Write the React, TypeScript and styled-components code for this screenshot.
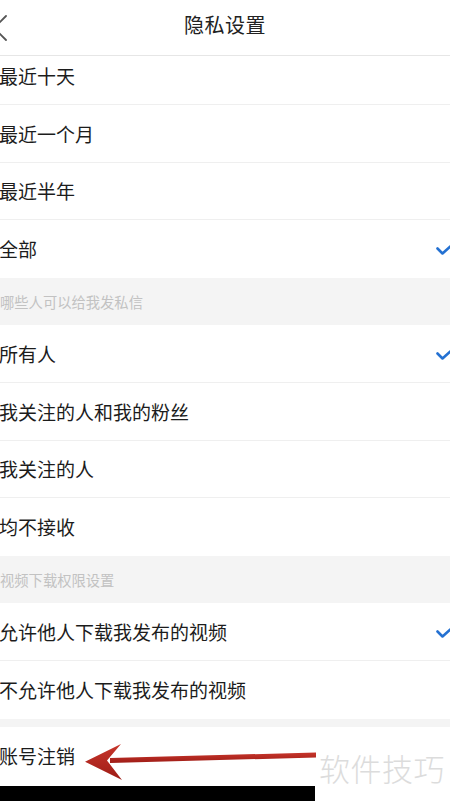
import styled, { createGlobalStyle } from "styled-components";

const GlobalStyle = createGlobalStyle`
  html, body {
    margin: 0;
    padding: 0;
    background: #ffffff;
  }
  body {
    font-family: "Noto Sans CJK SC", "Noto Sans", sans-serif;
    overflow: hidden;
  }
`;

const Screen = styled.div`
  position: relative;
  width: 450px;
  height: 801px;
  overflow: hidden;
  background: #ffffff;
  display: flex;
  flex-direction: column;
`;

const NavBar = styled.header`
  position: relative;
  z-index: 2;
  height: 56px;
  flex-shrink: 0;
  box-sizing: border-box;
  border-bottom: 1px solid #e6e6e6;
  background: #ffffff;
  display: grid;
  grid-template-columns: 60px 1fr 60px;
  align-items: center;
`;

const BackButton = styled.button`
  border: none;
  background: transparent;
  padding: 0;
  margin-left: -9px;
  height: 56px;
  display: flex;
  align-items: center;
  justify-self: start;
`;

const Title = styled.h1`
  margin: 0;
  text-align: center;
  font-size: 20px;
  font-weight: 400;
  color: #222;
  letter-spacing: 0.5px;
  transform: translateY(-4px);
`;

const Scroller = styled.main`
  flex: 1;
  overflow: hidden;
`;

const List = styled.div`
  margin-top: -8.6px;
  display: flex;
  flex-direction: column;
`;

const Row = styled.div<{ $last?: boolean }>`
  height: 57.6px;
  flex-shrink: 0;
  box-sizing: border-box;
  border-bottom: ${(p) => (p.$last ? "none" : "1px solid #efefef")};
  display: flex;
  align-items: center;
  justify-content: space-between;
  padding-left: 0;
  font-size: 19px;
  color: #1c1c1c;
  background: #ffffff;
`;

const RowLabel = styled.span`
  margin-left: -1px;
  white-space: nowrap;
`;

const Check = styled.svg`
  width: 20px;
  height: 14px;
  margin-right: -6px;
  flex-shrink: 0;
`;

const SectionHeader = styled.div`
  height: 47.6px;
  flex-shrink: 0;
  background: #f4f4f4;
  display: flex;
  align-items: center;
  font-size: 14.3px;
  color: #c2c2c2;
`;

const Spacer = styled.div`
  height: 8px;
  flex-shrink: 0;
  background: #f4f4f4;
`;

const BottomBar = styled.div`
  height: 15px;
  width: 315px;
  background: #000;
  flex-shrink: 0;
`;

const Watermark = styled.div`
  position: absolute;
  left: 319px;
  top: 745px;
  font-size: 31px;
  font-weight: 300;
  color: #dcdcdc;
  letter-spacing: 0.5px;
  white-space: nowrap;
  pointer-events: none;
`;

const ArrowOverlay = styled.svg`
  position: absolute;
  left: 0;
  top: 730px;
  width: 320px;
  height: 60px;
  pointer-events: none;
`;

type Item = { label: string; checked?: boolean };

const recent: Item[] = [
  { label: "最近十天" },
  { label: "最近一个月" },
  { label: "最近半年" },
  { label: "全部", checked: true },
];

const messages: Item[] = [
  { label: "所有人", checked: true },
  { label: "我关注的人和我的粉丝" },
  { label: "我关注的人" },
  { label: "均不接收" },
];

const downloads: Item[] = [
  { label: "允许他人下载我发布的视频", checked: true },
  { label: "不允许他人下载我发布的视频" },
];

function CheckMark() {
  return (
    <Check viewBox="0 0 20 14">
      <path
        d="M1.5 6.5 L6.5 11.5 L18 1"
        fill="none"
        stroke="#2471d2"
        strokeWidth="2.6"
        strokeLinecap="round"
        strokeLinejoin="round"
      />
    </Check>
  );
}

function Rows({ items, lastNoBorder }: { items: Item[]; lastNoBorder?: boolean }) {
  return (
    <>
      {items.map((it, i) => (
        <Row key={it.label} $last={lastNoBorder && i === items.length - 1}>
          <RowLabel>{it.label}</RowLabel>
          {it.checked && <CheckMark />}
        </Row>
      ))}
    </>
  );
}

export default function App() {
  return (
    <>
      <GlobalStyle />
      <Screen>
        <NavBar>
          <BackButton aria-label="返回">
            <svg width="18" height="28" viewBox="0 0 18 28">
              <path
                d="M15 2 L3 14 L15 26"
                fill="none"
                stroke="#555"
                strokeWidth="1.8"
                strokeLinecap="round"
                strokeLinejoin="round"
              />
            </svg>
          </BackButton>
          <Title>隐私设置</Title>
          <span />
        </NavBar>

        <Scroller>
          <List>
            <Rows items={recent} lastNoBorder />
            <SectionHeader>哪些人可以给我发私信</SectionHeader>
            <Rows items={messages} lastNoBorder />
            <SectionHeader>视频下载权限设置</SectionHeader>
            <Rows items={downloads} lastNoBorder />
            <Spacer />
            <Row $last>
              <RowLabel>账号注销</RowLabel>
            </Row>
          </List>
        </Scroller>
        <BottomBar />

        <Watermark>软件技巧</Watermark>
        <ArrowOverlay viewBox="0 0 320 60">
          <defs>
            <linearGradient id="arrowShade" x1="0" y1="0" x2="0" y2="1">
              <stop offset="0" stopColor="#c7352b" />
              <stop offset="1" stopColor="#9e1c16" />
            </linearGradient>
          </defs>
          <path
            d="M316 22.5 L316 27.5 L110 33 L110 28 Z"
            fill="url(#arrowShade)"
          />
          <path
            d="M85 31.7 L121 14 L107 30.5 L122 50 Z"
            fill="url(#arrowShade)"
          />
        </ArrowOverlay>
      </Screen>
    </>
  );
}
